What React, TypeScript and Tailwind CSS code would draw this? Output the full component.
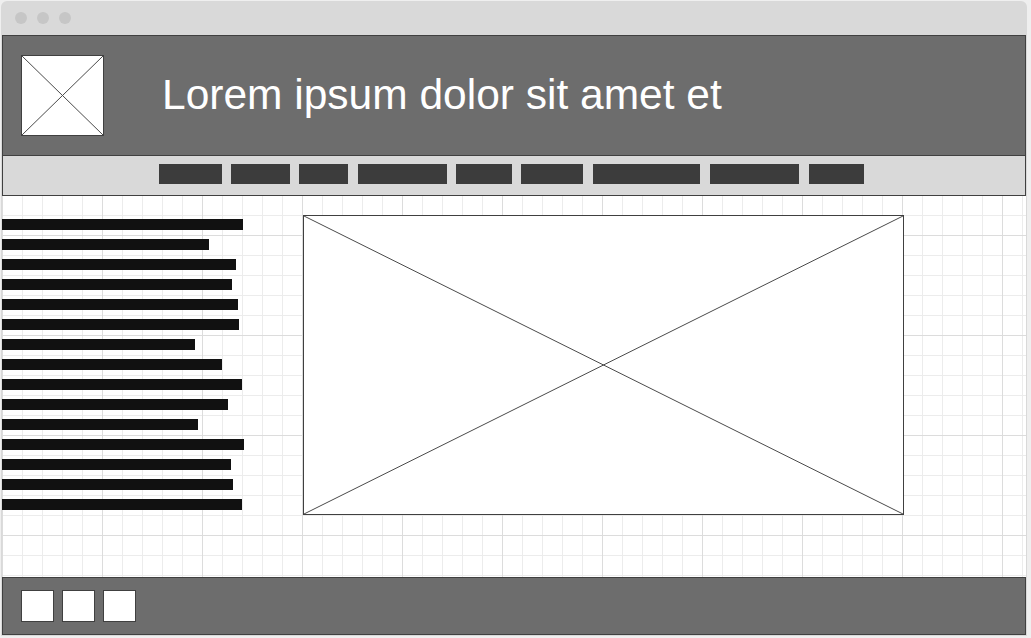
import React from "react";

const bars = [241, 207, 234, 230, 236, 237, 193, 220, 240, 226, 196, 242, 229, 231, 240];

function XBox({ className }: { className: string }) {
  return (
    <div className={"relative border border-[#404040] bg-white " + className}>
      <svg className="absolute inset-0 h-full w-full" preserveAspectRatio="none" viewBox="0 0 100 100">
        <line x1="0" y1="0" x2="100" y2="100" stroke="#4a4a4a" strokeWidth="1" vectorEffect="non-scaling-stroke" />
        <line x1="100" y1="0" x2="0" y2="100" stroke="#4a4a4a" strokeWidth="1" vectorEffect="non-scaling-stroke" />
      </svg>
    </div>
  );
}

export default function App() {
  return (
    <div className="h-[638px] w-[1031px] overflow-hidden bg-[#efefef] pl-[1px] pt-[1px] font-['Liberation_Sans',Arial,sans-serif]">
      <div className="flex h-[635px] w-[1026px] flex-col rounded-t-[6px] bg-[#d9d9d9] px-[1px]">
        {/* title bar */}
        <div className="flex h-[34px] shrink-0 items-center gap-[10px] pl-[13px]">
          <div className="h-[12px] w-[12px] rounded-full bg-[#c6c6c6]" />
          <div className="h-[12px] w-[12px] rounded-full bg-[#c6c6c6]" />
          <div className="h-[12px] w-[12px] rounded-full bg-[#c6c6c6]" />
        </div>
        {/* header */}
        <div className="flex h-[121px] shrink-0 items-center border border-[#404040] bg-[#6d6d6d] pl-[18px]">
          <XBox className="h-[81px] w-[83px]" />
          <div className="ml-[58px] -mt-[2px] text-[42.5px] leading-[48px] text-white">Lorem ipsum dolor sit amet et</div>
        </div>
        {/* nav */}
        <div className="flex h-[40px] shrink-0 items-start border-x border-b border-[#404040] bg-[#d9d9d9] pl-[156px] pt-[8px]">
          <div className="h-[20px] w-[63px] bg-[#3c3c3c]" />
          <div className="ml-[9px] h-[20px] w-[59px] bg-[#3c3c3c]" />
          <div className="ml-[9px] h-[20px] w-[49px] bg-[#3c3c3c]" />
          <div className="ml-[10px] h-[20px] w-[89px] bg-[#3c3c3c]" />
          <div className="ml-[9px] h-[20px] w-[56px] bg-[#3c3c3c]" />
          <div className="ml-[9px] h-[20px] w-[62px] bg-[#3c3c3c]" />
          <div className="ml-[10px] h-[20px] w-[107px] bg-[#3c3c3c]" />
          <div className="ml-[10px] h-[20px] w-[89px] bg-[#3c3c3c]" />
          <div className="ml-[10px] h-[20px] w-[55px] bg-[#3c3c3c]" />
        </div>
        {/* content */}
        <div className="flex h-[381px] shrink-0 items-start bg-white [background-image:linear-gradient(to_right,#dcdcdc_1px,transparent_1px),linear-gradient(to_bottom,#dcdcdc_1px,transparent_1px),linear-gradient(to_right,#ececec_1px,transparent_1px),linear-gradient(to_bottom,#ececec_1px,transparent_1px)] [background-size:100px_100px,100px_100px,20px_20px,20px_20px] [background-position:0_39px,0_39px,0_-1px,0_-1px]">
          <div className="mt-[23px] flex w-[242px] flex-col gap-[9px]">
            {bars.map((w, i) => (
              <div key={i} className="h-[11px] bg-[#111111]" style={{ width: w }} />
            ))}
          </div>
          <XBox className="ml-[59px] mt-[19px] h-[300px] w-[601px]" />
        </div>
        {/* footer */}
        <div className="flex h-[58px] shrink-0 items-center gap-[8px] border border-[#404040] bg-[#6d6d6d] pl-[18px]">
          <div className="h-[32px] w-[33px] border border-[#404040] bg-white" />
          <div className="h-[32px] w-[33px] border border-[#404040] bg-white" />
          <div className="h-[32px] w-[33px] border border-[#404040] bg-white" />
        </div>
      </div>
    </div>
  );
}
